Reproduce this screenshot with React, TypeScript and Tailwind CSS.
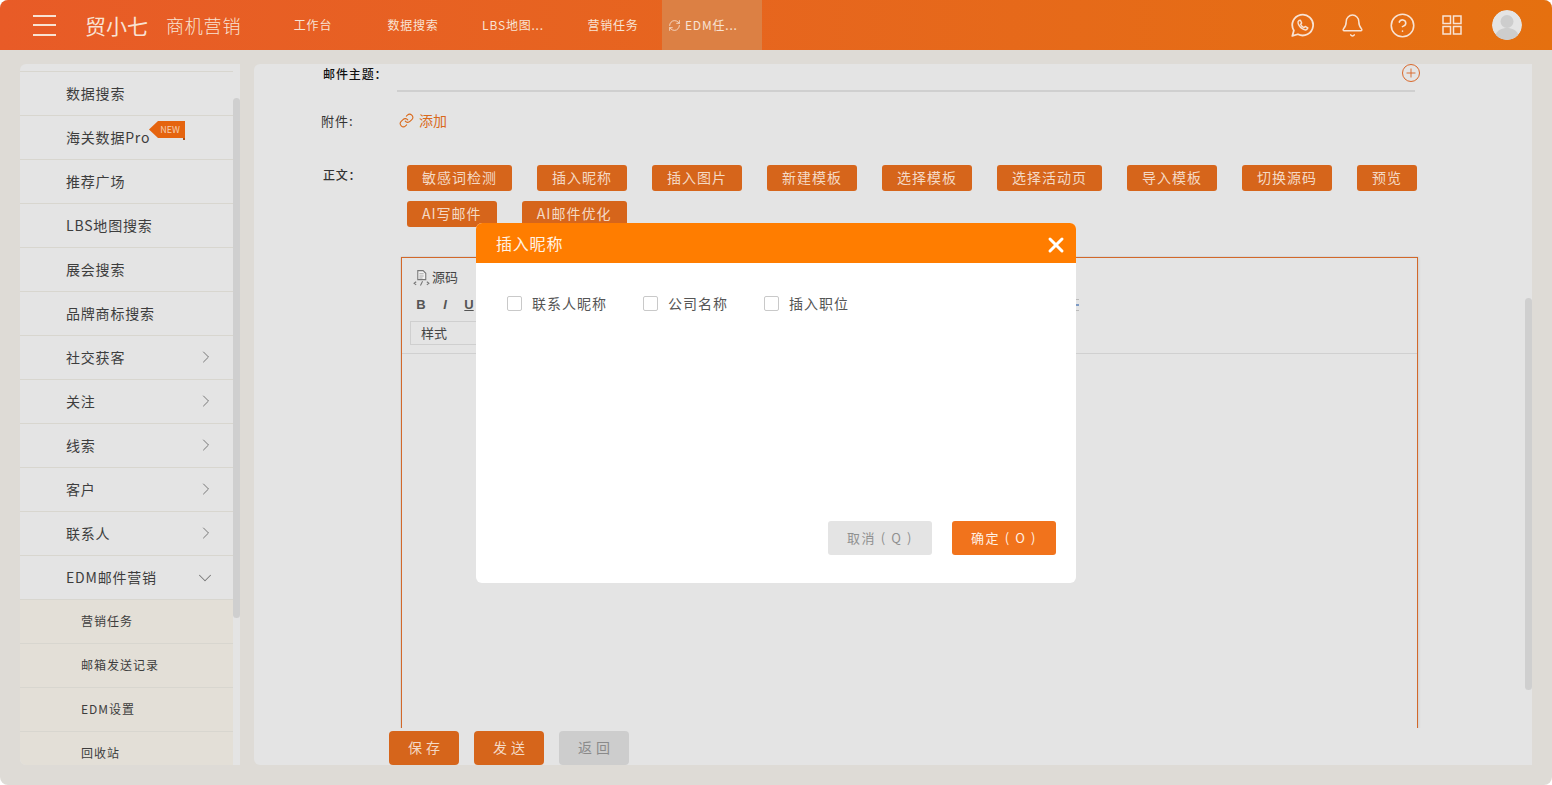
import { Bell, ChevronDown, ChevronRight, CircleHelp, Link, Plus, RefreshCw, X } from "lucide-react";

const tabs = ["工作台", "数据搜索", "LBS地图...", "营销任务"];

const menuItems = [
  { label: "数据搜索" },
  { label: "海关数据Pro", isNew: true },
  { label: "推荐广场" },
  { label: "LBS地图搜索" },
  { label: "展会搜索" },
  { label: "品牌商标搜索" },
  { label: "社交获客", arrow: true },
  { label: "关注", arrow: true },
  { label: "线索", arrow: true },
  { label: "客户", arrow: true },
  { label: "联系人", arrow: true },
];

const subItems = ["营销任务", "邮箱发送记录", "EDM设置", "回收站"];

const toolButtons = [
  "敏感词检测",
  "插入昵称",
  "插入图片",
  "新建模板",
  "选择模板",
  "选择活动页",
  "导入模板",
  "切换源码",
  "预览",
  "AI写邮件",
  "AI邮件优化",
];

const nicknameOptions = ["联系人昵称", "公司名称", "插入职位"];

function WhatsappIcon() {
  return (
    <svg viewBox="0 0 24 24" className="h-[25px] w-[25px]" fill="none" stroke="currentColor" strokeWidth="1.7">
      <path d="M2.2 22l1.5-5.2A10 10 0 1 1 7.6 20.4z" strokeLinejoin="round" />
      <path d="M8.6 7.2c-.9.7-1.2 1.9-.7 3.2 1 2.600 3.100 4.700 5.700 5.600 1.400.5 2.600.1 3.200-.9l.3-.9-2.500-1.300-1.100 1.100c-1.300-.5-2.800-2-3.300-3.300l1-1.100-1.200-2.600z" strokeLinejoin="round" strokeWidth="1.400" />
    </svg>
  );
}

function GridIcon() {
  return (
    <svg viewBox="0 0 20 20" className="h-[20px] w-[20px]" fill="none" stroke="currentColor" strokeWidth="1.5">
      <rect x="1" y="1" width="7.500" height="7.500" />
      <rect x="11.500" y="1" width="7.500" height="7.500" />
      <rect x="1" y="11.500" width="7.500" height="7.500" />
      <rect x="11.500" y="11.500" width="7.500" height="7.500" />
    </svg>
  );
}

function Avatar() {
  return (
    <svg viewBox="0 0 30 30" className="h-[30px] w-[30px] rounded-full">
      <circle cx="15" cy="15" r="15" fill="#e4e4e4" />
      <circle cx="15" cy="11.500" r="6.500" fill="#cdcdcd" />
      <path d="M3 26c2-6 7-8 12-8s10 2 12 8a15 15 0 0 1-24 0z" fill="#cdcdcd" />
    </svg>
  );
}

function SourceIcon() {
  return (
    <svg viewBox="0 0 16 16" className="h-[17px] w-[17px]" fill="none" stroke="#777" strokeWidth="1">
      <path d="M4.500 1.500h5l2.500 2.500v6h-7.500z" fill="#f2f2f2" />
      <path d="M6 4.500h4M6 6.500h4M6 8.500h3" stroke="#aaa" />
      <path d="M3 12l-2 1.500 2 1.500M13 12l2 1.500-2 1.500M9 11.500l-2 4" />
    </svg>
  );
}

export default function App() {
  return (
    <div className="h-[785px] w-[1552px] overflow-hidden bg-white font-['Noto_Sans_CJK_SC','Liberation_Sans',sans-serif]">
      <div className="relative flex h-full flex-col overflow-hidden rounded-[8px] bg-[#dedbd6]">
        {/* top bar */}
        <header className="flex h-[50px] shrink-0 items-center bg-gradient-to-r from-[#e85b27] to-[#e5700f] text-[#f8e3d4]">
          <div className="ml-[33px] flex h-[21px] w-[23px] flex-col justify-between">
            <span className="h-[2px] bg-[#f8e3d4]" />
            <span className="h-[2px] bg-[#f8e3d4]" />
            <span className="h-[2px] bg-[#f8e3d4]" />
          </div>
          <div className="ml-[29px] w-[62px] whitespace-nowrap text-[21px] leading-none">贸小七</div>
          <div className="ml-[19px] w-[76px] whitespace-nowrap text-[18px] font-light leading-none tracking-[0.8px]">商机营销</div>
          <nav className="ml-[20px] flex h-full text-[12px] tracking-[0.8px]">
            {tabs.map((tab) => (
              <div key={tab} className="flex h-full w-[100px] items-center justify-center pl-[2px]">
                {tab}
              </div>
            ))}
            <div className="flex h-full w-[100px] items-center gap-[4px] bg-[#dc8044] pl-[6px]">
              <RefreshCw className="h-[13px] w-[13px]" strokeWidth={1.5} />
              EDM任...
            </div>
          </nav>
          <div className="ml-auto flex items-center">
            <div className="flex w-[50px] justify-center"><WhatsappIcon /></div>
            <div className="flex w-[50px] justify-center"><Bell className="h-[25px] w-[25px]" strokeWidth={1.4} /></div>
            <div className="flex w-[50px] justify-center"><CircleHelp className="h-[27px] w-[27px]" strokeWidth={1.4} /></div>
            <div className="flex w-[50px] justify-center"><GridIcon /></div>
            <div className="ml-[15px] mr-[30px]"><Avatar /></div>
          </div>
        </header>

        <div className="flex min-h-0 flex-1 gap-[14px] pl-[20px] pr-[20px] pt-[14px] pb-[20px]">
          {/* side menu */}
          <aside className="relative w-[220px] shrink-0 overflow-hidden rounded-l-[6px] bg-[#e4e4e4] text-[14px] tracking-[0.8px] text-[#3d3d3d]">
            <div className="w-[213px] pt-[7px]">
              <div className="border-t border-[#d8d6cf]" />
              {menuItems.map((item) => (
                <div key={item.label} className="relative flex h-[44px] items-center justify-between border-b border-[#d8d6cf] pl-[46px] pr-[17px]">
                  <span>{item.label}</span>
                  {item.isNew && (
                    <>
                      <span className="absolute left-[129px] top-[5px] flex h-[17px] w-[36px] items-center justify-center bg-[#e5640f] pl-[6px] text-[9px] tracking-normal text-[#f6cfb0] [clip-path:polygon(9px_0,100%_0,100%_100%,9px_100%,0_50%)]">
                        NEW
                      </span>
                      <span className="absolute left-[163px] top-[22px] h-[2px] w-[2px] bg-[#a8501a]" />
                    </>
                  )}
                  {item.arrow && <ChevronRight className="relative -top-[1px] h-[20px] w-[20px] text-[#777]" strokeWidth={1.2} />}
                </div>
              ))}
              <div className="flex h-[44px] items-center justify-between border-b border-[#d8d6cf] pl-[46px] pr-[17px]">
                <span>EDM邮件营销</span>
                <ChevronDown className="h-[22px] w-[22px] text-[#777]" strokeWidth={1.1} />
              </div>
              {subItems.map((item) => (
                <div key={item} className="flex h-[44px] items-center border-b border-[#d8d6cf] bg-[#e3dfd7] pb-[2px] pl-[61px] text-[12px] tracking-[1px]">
                  {item}
                </div>
              ))}
            </div>
            <div className="absolute right-0 top-[34px] h-[520px] w-[7px] rounded-[4px] bg-[#cfcfcf]" />
          </aside>

          {/* main form */}
          <main className="relative flex min-w-0 flex-1 flex-col overflow-hidden rounded-l-[6px] bg-[#e4e4e4] text-[12px] text-[#333]">
            <div className="flex h-[28px] shrink-0 pl-[69px]">
              <div className="w-[74px] pt-[1px] font-medium tracking-[0.9px] text-[#111]">邮件主题：</div>
              <div className="relative w-[1018px] border-b-2 border-[#cfcfcf]">
                <span className="absolute -right-[5px] top-0 flex h-[18px] w-[18px] items-center justify-center rounded-full border border-[#d9682a] text-[#d9682a]">
                  <Plus className="h-[14px] w-[14px]" strokeWidth={1.6} />
                </span>
              </div>
            </div>
            <div className="mt-[15px] flex h-[28px] shrink-0 items-center pb-[1px] pl-[67px]">
              <div className="w-[78px] text-[13px] tracking-[1px]">附件:</div>
              <div className="flex items-center gap-[5px] text-[14px] text-[#d96a1c]">
                <Link className="h-[15px] w-[15px]" strokeWidth={1.7} />
                添加
              </div>
            </div>
            <div className="mt-[30px] flex shrink-0 pl-[69px]">
              <div className="w-[84px] pt-[1px] font-medium tracking-[0.8px]">正文：</div>
              <div className="flex w-[1010px] flex-wrap gap-x-[25px] gap-y-[10px]">
                {toolButtons.map((btn) => (
                  <div
                    key={btn}
                    className={`flex h-[26px] items-center justify-center rounded-[3px] bg-[#d6651b] pb-[2px] text-[14px] tracking-[1px] text-[#f4d9c5] ${btn === "AI邮件优化" ? "w-[105px]" : "px-[15px]"}`}
                  >
                    {btn}
                  </div>
                ))}
              </div>
            </div>
            <div className="mb-[3px] ml-[146px] mt-[29px] min-h-0 flex-1 overflow-hidden p-[1px]">
              <div className="h-[600px] w-[1017px] border border-[#d2682a] shadow-[0_0_3px_rgba(0,0,0,0.15)]">
                <div className="h-[96px] border-b border-[#d0d0d0] pl-[8px] pt-[9px] text-[#444]">
                  <div className="flex h-[20px] items-center gap-[2px] pl-[3px] text-[13px]">
                    <SourceIcon />
                    <span>源码</span>
                    <span className="ml-[17px] h-[10px] w-[3px] bg-[#c3ccd8]" />
                  </div>
                  <div className="-ml-[1px] mt-[8px] flex h-[20px] items-center font-['Liberation_Sans',sans-serif] text-[13px] font-bold text-[#555]">
                    <span className="w-[24px] text-center">B</span>
                    <span className="w-[24px] text-center italic">I</span>
                    <span className="w-[24px] text-center underline">U</span>
                    <span className="ml-[594px] h-[12px] w-[4px] border-y border-[#bbb] bg-[linear-gradient(#e4e4e4_4px,#7d9ac4_4px,#7d9ac4_6px,#e4e4e4_6px)]" />
                  </div>
                  <div className="mt-[6px] flex h-[24px] w-[120px] items-center border border-[#cfcfcf] pl-[10px] text-[13px]">样式</div>
                </div>
              </div>
            </div>
            <div className="flex shrink-0 gap-[15px] pl-[135px] text-[14px] tracking-[4px]">
              <div className="flex h-[34px] w-[70px] items-center justify-center rounded-[4px] bg-[#d6651b] pb-[2px] pl-[4px] text-[#f4d9c5]">保存</div>
              <div className="flex h-[34px] w-[70px] items-center justify-center rounded-[4px] bg-[#d6651b] pb-[2px] pl-[4px] text-[#f4d9c5]">发送</div>
              <div className="flex h-[34px] w-[70px] items-center justify-center rounded-[4px] bg-[#cdcdcd] pb-[2px] pl-[4px] text-[#8a8a8a]">返回</div>
            </div>
            <div className="absolute right-0 top-[234px] h-[392px] w-[7px] rounded-[4px] bg-[#cfcfcf]" />
          </main>
        </div>

        {/* nickname dialog */}
        <div className="absolute left-[476px] top-[223px] flex h-[360px] w-[600px] flex-col overflow-hidden rounded-[6px] bg-white">
          <div className="flex h-[40px] shrink-0 items-center justify-between bg-[#ff7d00] pl-[20px] pr-[8px] text-[16px] tracking-[0.8px] text-[#fff3e6]">
            插入昵称
            <X className="relative top-[2px] h-[24px] w-[24px] text-white" strokeWidth={3} />
          </div>
          <div className="flex pl-[31px] pt-[30px] text-[14px] tracking-[1px] text-[#555]">
            {nicknameOptions.map((opt) => (
              <label key={opt} className="mr-[36px] flex items-center">
                <span className="mr-[10px] h-[15px] w-[15px] rounded-[2px] border border-[#c9c9c9] bg-white" />
                {opt}
              </label>
            ))}
          </div>
          <div className="mt-auto flex justify-end gap-[20px] pb-[28px] pr-[20px] text-[13px] tracking-[1.6px]">
            <div className="flex h-[34px] w-[104px] items-center justify-center rounded-[3px] bg-[#e4e4e4] text-[#909090]">取消 ( Q )</div>
            <div className="flex h-[34px] w-[104px] items-center justify-center rounded-[3px] bg-[#f1731c] text-[#fff0e4]">确定 ( O )</div>
          </div>
        </div>
      </div>
    </div>
  );
}
